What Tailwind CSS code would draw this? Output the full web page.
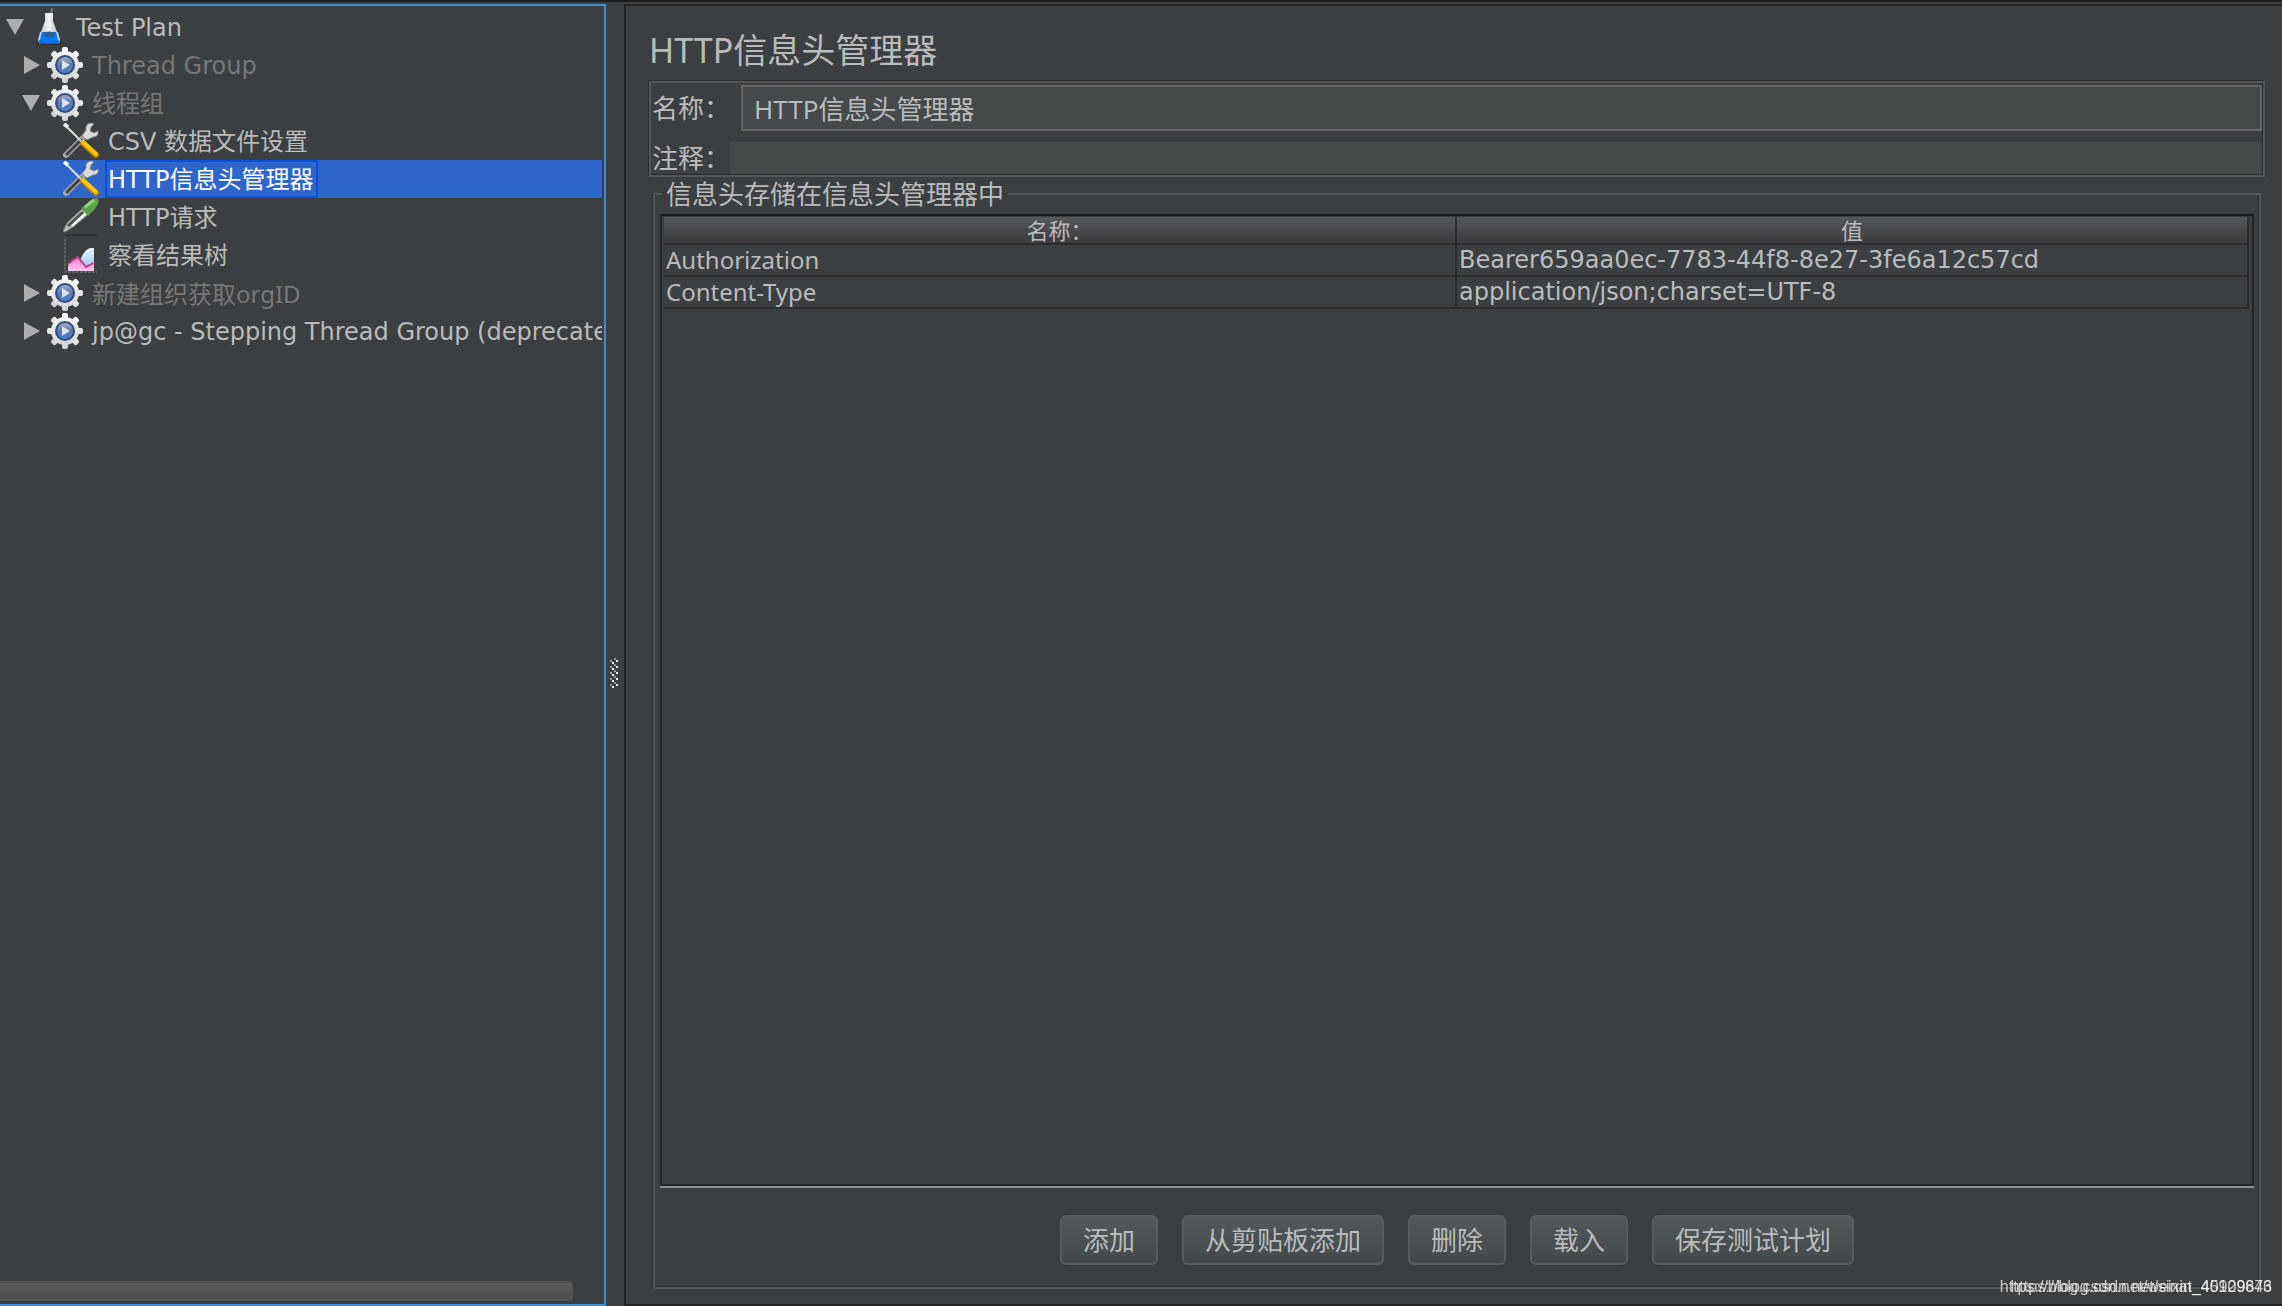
<!DOCTYPE html>
<html lang="zh-CN">
<head>
<meta charset="utf-8">
<title>JMeter - HTTP信息头管理器</title>
<script src="https://cdn.jsdelivr.net/npm/@tailwindcss/browser@4"></script>
</head>
<body class="flex h-screen flex-col overflow-hidden border-t-2 border-[#1d1e1f] bg-[#3c3f41] pt-[2px] font-['Noto_Sans','Noto_Sans_CJK_SC',sans-serif] text-[#bbbbbb]">

<svg class="absolute size-0" aria-hidden="true">
  <defs>
    <linearGradient id="metal" x1="0" y1="0" x2="0" y2="36" gradientUnits="userSpaceOnUse"><stop offset="0" stop-color="#fafafa"/><stop offset="1" stop-color="#d2d2d2"/></linearGradient>
    <linearGradient id="orb" x1="0" y1="0" x2="0" y2="1"><stop offset="0" stop-color="#a3aec2"/><stop offset=".5" stop-color="#5877ac"/><stop offset="1" stop-color="#4a80d4"/></linearGradient>
    <linearGradient id="glass" x1="0" y1="0" x2="1" y2="0"><stop offset="0" stop-color="#b4b8bb"/><stop offset=".5" stop-color="#f4f4f4"/><stop offset="1" stop-color="#a9afb3"/></linearGradient>
    <linearGradient id="sky" x1="0" y1="0" x2="0" y2="1"><stop offset="0" stop-color="#eaf6ff"/><stop offset="1" stop-color="#8fc0f5"/></linearGradient>
    <linearGradient id="rose" x1="0" y1="0" x2="0" y2="1"><stop offset="0" stop-color="#f080c8"/><stop offset="1" stop-color="#ffc4f0"/></linearGradient>
    <symbol id="gear" viewBox="0 0 36 36">
      <g fill="url(#metal)">
        <rect x="15" y="0" width="6" height="36" rx="2"/><rect x="0" y="15" width="36" height="6" rx="2"/>
        <g transform="rotate(45 18 18)"><rect x="15" y="0" width="6" height="36" rx="2"/><rect x="0" y="15" width="36" height="6" rx="2"/></g>
        <circle cx="18" cy="18" r="14"/>
      </g>
      <circle cx="18" cy="18" r="10" fill="#2f4a7a"/>
      <circle cx="18" cy="18" r="8" fill="url(#orb)"/>
      <path d="M15 13L23 18L15 23z" fill="#dfe3ea"/>
    </symbol>
    <symbol id="flask" viewBox="0 0 36 38">
      <ellipse cx="18" cy="35" rx="14" ry="2" fill="#2a2c2e"/>
      <path d="M21 0L20 7" stroke="#777" stroke-width="2"/>
      <path d="M14 5H22V13L29 32Q29 36 25 36H11Q7 36 7 32L14 13z" fill="url(#glass)"/>
      <path d="M10 24H26L28 32Q28 36 25 36H11Q8 36 8 32z" fill="#0a78f0"/>
      <path d="M11 25Q18 22 25 25L22 29H14z" fill="#2c5f96"/>
      <path d="M8 33Q18 37 28 33Q27 36 25 36H11Q8 36 8 33" fill="#0560d8"/>
      <path d="M10 24L8 32M26 24L28 32" stroke="#a9cdf2" stroke-width="2"/>
    </symbol>
    <symbol id="tools" viewBox="0 0 36 38">
      <path d="M3 33L22 14" stroke="#a5a5a5" stroke-width="6" stroke-linecap="round"/>
      <path d="M4 32L18 18" stroke="#414243" stroke-width="3" stroke-linecap="round"/>
      <path d="M28 1Q22 2 23 8L19 14L24 18L30 15Q36 15 35 9L31 11L27 9L28 5L31 2z" fill="#dcdcdc" stroke="#888" stroke-width="1"/>
      <path d="M2 3L19 20" stroke="#dedede" stroke-width="2"/>
      <path d="M1 2L5 5" stroke="#f5f5f5" stroke-width="4"/>
      <path d="M20 21L33 33" stroke="#b98000" stroke-width="6" stroke-linecap="round"/>
      <path d="M20 20L33 32" stroke="#fbc70c" stroke-width="4" stroke-linecap="round"/>
    </symbol>
    <symbol id="dropper" viewBox="0 0 36 38">
      <path d="M2 37H34" stroke="#2f3132" stroke-width="2"/>
      <path d="M0 33L4 25L20 10L26 16L10 29L2 34z" fill="#b9bbb9" stroke="#7b7d7b" stroke-width="1"/>
      <path d="M5 28L20 14" stroke="#4f5553" stroke-width="3"/>
      <path d="M9 28L23 15" stroke="#fff" stroke-width="2"/>
      <path d="M18 10L23 7Q27 1 33 0Q37 1 35 6Q32 12 29 14L25 18z" fill="#5ca24c"/>
      <path d="M22 9L31 2" stroke="#98cf88" stroke-width="3"/>
    </symbol>
    <symbol id="chart" viewBox="0 0 36 38">
      <path d="M2 3V36H34" fill="none" stroke="#5c5f61" stroke-width="2" stroke-dasharray="3 1"/>
      <path d="M31 12H27Q20 15 17 25L20 34H31z" fill="url(#sky)"/>
      <path d="M5 35V28L10 24L15 21L19 26L23 31L27 29L31 25V35z" fill="url(#rose)"/>
      <path d="M5 28L10 24L15 21L19 26L23 31L27 29L30 27" fill="none" stroke="#c03a86" stroke-width="2"/>
    </symbol>
    <symbol id="open" viewBox="0 0 18 18"><path d="M0 1H18L9 17z" fill="#adadad"/></symbol>
    <symbol id="closed" viewBox="0 0 18 18"><path d="M0 0L16 9L0 18z" fill="#adadad"/></symbol>
  </defs>
</svg>

<div class="flex min-h-0 flex-1">

  <!-- test plan tree -->
  <nav class="flex w-[606px] shrink-0 flex-col border-y-2 border-r-2 border-[#3d8fd1] pt-[2px] pr-[2px]">
    <ul role="tree" class="flex-1 overflow-hidden font-['DejaVu_Sans','Noto_Sans_CJK_SC',sans-serif] text-2xl leading-[38px] whitespace-nowrap *:flex *:h-[38px] *:items-center [&_span]:pt-[2px]">
      <li role="treeitem" aria-expanded="true" class="pl-[6px]">
        <button aria-label="折叠" class="mr-[7px] size-[18px]"><svg class="size-[18px]"><use href="#open"/></svg></button>
        <svg class="mr-[9px] h-[38px] w-[36px]"><use href="#flask"/></svg><span>Test Plan</span></li>
      <li role="treeitem" aria-expanded="false" class="pl-6 text-[#777777]">
        <button aria-label="展开" class="mr-[5px] size-[18px]"><svg class="size-[18px]"><use href="#closed"/></svg></button>
        <svg class="mr-[9px] size-[36px]"><use href="#gear"/></svg><span>Thread Group</span></li>
      <li role="treeitem" aria-expanded="true" class="pl-[22px] text-[#777777]">
        <button aria-label="折叠" class="mr-[7px] size-[18px]"><svg class="size-[18px]"><use href="#open"/></svg></button>
        <svg class="mr-[9px] size-[36px]"><use href="#gear"/></svg><span>线程组</span></li>
      <li role="treeitem" class="pl-[63px]"><svg class="mr-[9px] h-[38px] w-[36px]"><use href="#tools"/></svg><span>CSV 数据文件设置</span></li>
      <li role="treeitem" aria-selected="true" class="bg-[#2f65ca] pl-[63px] text-white"><svg class="mr-[6px] h-[38px] w-[36px]"><use href="#tools"/></svg><span class="flex h-[38px] items-center border-2 border-[#0a4fdc] pr-[3px] pl-px">HTTP信息头管理器</span></li>
      <li role="treeitem" class="pl-[63px]"><svg class="mr-[9px] h-[38px] w-[36px]"><use href="#dropper"/></svg><span>HTTP请求</span></li>
      <li role="treeitem" class="pl-[63px]"><svg class="mr-[9px] h-[38px] w-[36px]"><use href="#chart"/></svg><span>察看结果树</span></li>
      <li role="treeitem" aria-expanded="false" class="pl-6 font-['Noto_Sans','Noto_Sans_CJK_SC',sans-serif] text-[#777777]">
        <button aria-label="展开" class="mr-[5px] size-[18px]"><svg class="size-[18px]"><use href="#closed"/></svg></button>
        <svg class="mr-[9px] size-[36px]"><use href="#gear"/></svg><span>新建组织获取orgID</span></li>
      <li role="treeitem" aria-expanded="false" class="pl-6">
        <button aria-label="展开" class="mr-[5px] size-[18px] shrink-0"><svg class="size-[18px]"><use href="#closed"/></svg></button>
        <svg class="mr-[9px] size-[36px] shrink-0"><use href="#gear"/></svg><span>jp@gc - Stepping Thread Group (deprecated)</span></li>
    </ul>
    <div class="mb-[3px] h-5 w-[573px] rounded-r-sm border-2 border-l-0 border-[#545454] bg-linear-to-b from-[#5d5d5d] to-[#4e4e4e]"></div>
  </nav>

  <!-- split pane grip -->
  <div class="flex w-[18px] shrink-0 items-center pt-9 pl-1">
    <svg class="h-[30px] w-2" viewBox="0 0 8 30" shape-rendering="crispEdges">
      <defs><pattern id="grip" width="8" height="6" patternUnits="userSpaceOnUse"><rect x="4" y="0" width="2" height="2" fill="#999"/><rect x="0" y="2" width="2" height="2" fill="#999"/><rect x="6" y="2" width="2" height="2" fill="#eee"/><rect x="2" y="4" width="2" height="2" fill="#eee"/></pattern></defs>
      <rect width="8" height="30" fill="url(#grip)"/>
    </svg>
  </div>

  <!-- header manager -->
  <main class="flex min-w-0 flex-1 flex-col border-y-2 border-l-2 border-[#242526] pr-[17px] pb-[15px] pl-[23px] text-[26px]">
    <h1 class="mt-5 mb-[7px] text-[34px] leading-[48px]">HTTP信息头管理器</h1>

    <form class="border-2 border-[#53575a] pl-px shadow-[-1px_-1px_0_#2b2d2e,inset_-1px_-1px_0_#2b2d2e]">
      <div class="flex items-center pt-[2px] pr-[1px]">
        <label for="name" class="w-[89px] shrink-0 whitespace-nowrap">名称：</label>
        <input id="name" value="HTTP信息头管理器" class="h-[46px] min-w-0 flex-1 border-2 border-[#646464] bg-[#45494a] px-[11px]">
      </div>
      <div class="mt-[11px] flex items-center pr-[1px] pb-[1px]">
        <label for="comment" class="w-[78px] shrink-0 leading-8 whitespace-nowrap">注释：</label>
        <input id="comment" class="h-8 min-w-0 flex-1 bg-[#45494a] px-3">
      </div>
    </form>

    <fieldset class="mr-1 ml-1 flex min-h-0 flex-1 flex-col border-2 border-[#53575a] px-[5px] pt-[3px] shadow-[-1px_0_0_#2b2d2e,inset_-1px_-1px_0_#2b2d2e]">
      <legend class="ml-[2px] px-1 leading-[34px]">信息头存储在信息头管理器中</legend>
      <div class="flex h-full flex-col">
        <div class="min-h-0 flex-1 border-b-2 border-[#8c9092]">
          <div class="h-full border-2 border-[#242526] border-t-[#1a1b1c] pt-px pr-[3px] pl-[2px]">
            <table class="w-full table-fixed border-collapse text-left text-2xl">
              <thead>
                <tr class="h-[27px] bg-linear-to-b from-[#54585b] to-[#3b3b3d] text-[22px] leading-[25px]">
                  <th class="border-r-2 border-b-2 border-[#2b2b2b] p-0 text-center font-normal">名称：</th>
                  <th class="border-r-2 border-b-2 border-[#2b2b2b] p-0 text-center font-normal">值</th>
                </tr>
              </thead>
              <tbody class="leading-[30px]">
                <tr>
                  <td class="border-r-2 border-b-2 border-[#2b2b2b] p-0 pl-[2px]">Authorization</td>
                  <td class="border-r-2 border-b-2 border-[#2b2b2b] p-0 pl-[2px] font-['DejaVu_Sans',sans-serif]">Bearer659aa0ec-7783-44f8-8e27-3fe6a12c57cd</td>
                </tr>
                <tr>
                  <td class="border-r-2 border-b-2 border-[#2b2b2b] p-0 pl-[2px]">Content-Type</td>
                  <td class="border-r-2 border-b-2 border-[#2b2b2b] p-0 pl-[2px] font-['DejaVu_Sans',sans-serif]">application/json;charset=UTF-8</td>
                </tr>
              </tbody>
            </table>
          </div>
        </div>
        <div class="flex justify-center gap-6 pt-[27px] pb-[22px] *:h-[50px] *:rounded-md *:border-2 *:border-[#5a5c5c] *:bg-linear-to-b *:from-[#53585b] *:to-[#43484a] *:px-[21px]">
          <button type="button">添加</button>
          <button type="button">从剪贴板添加</button>
          <button type="button">删除</button>
          <button type="button">载入</button>
          <button type="button">保存测试计划</button>
        </div>
      </div>
    </fieldset>
  </main>
</div>

<div class="pointer-events-none fixed right-[10px] bottom-[7px] grid justify-items-end font-['Liberation_Sans',sans-serif] text-base text-white/70 *:col-start-1 *:row-start-1">
  <span>https://blog.csdn.net/weixin_45109646</span>
  <span>https://blog.csdn.net/sinat_40929873</span>
</div>
</body>
</html>
